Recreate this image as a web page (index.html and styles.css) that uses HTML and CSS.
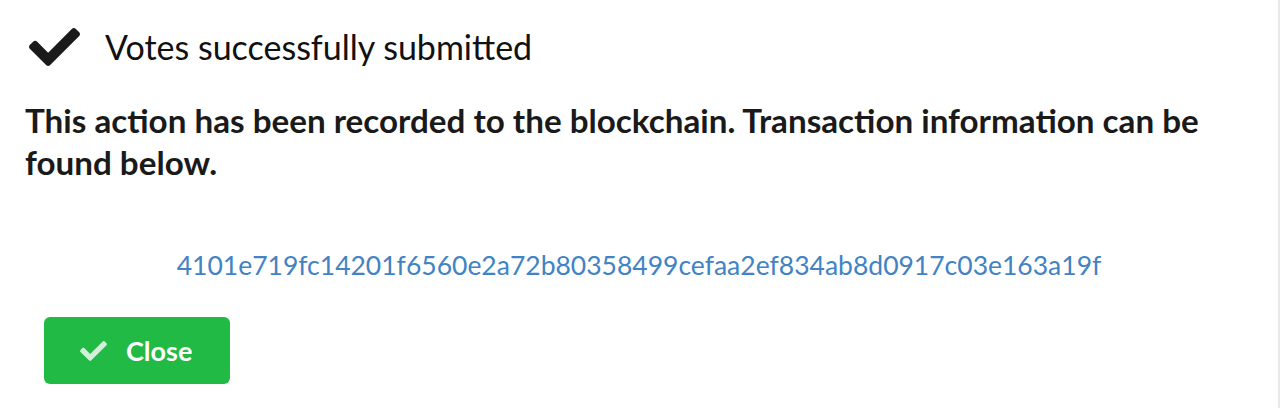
FILE: index.html
```html
<!DOCTYPE html>
<html lang="en">
<head>
<meta charset="utf-8">
<title>Votes submitted</title>
<link rel="stylesheet" href="styles.css">
</head>
<body>
<div class="modal">
  <div class="header">
    <svg class="header-icon" viewBox="0 65 512 382" width="51" height="38" aria-hidden="true">
      <path d="M173.898 439.404l-166.4-166.4c-9.997-9.997-9.997-26.206 0-36.204l36.203-36.204c9.997-9.998 26.207-9.998 36.204 0L192 312.69 432.095 72.596c9.997-9.997 26.207-9.997 36.204 0l36.203 36.204c9.997 9.997 9.997 26.206 0 36.204l-294.4 294.401c-9.998 9.997-26.207 9.997-36.204-.001z"/>
    </svg>
    <span class="header-text">Votes successfully submitted</span>
  </div>
  <div class="content">
    <p class="lead">This action has been recorded to the blockchain. Transaction information can be found below.</p>
    <div class="hash"><a class="hash-link" href="#">4101e719fc14201f6560e2a72b80358499cefaa2ef834ab8d0917c03e163a19f</a></div>
  </div>
  <div class="actions">
    <button class="btn-close" type="button">
      <svg class="btn-icon" viewBox="0 65 512 382" width="27" height="20" aria-hidden="true">
        <path d="M173.898 439.404l-166.4-166.4c-9.997-9.997-9.997-26.206 0-36.204l36.203-36.204c9.997-9.998 26.207-9.998 36.204 0L192 312.69 432.095 72.596c9.997-9.997 26.207-9.997 36.204 0l36.203 36.204c9.997 9.997 9.997 26.206 0 36.204l-294.4 294.401c-9.998 9.997-26.207 9.997-36.204-.001z"/>
      </svg>
      <span>Close</span>
    </button>
  </div>
</div>
</body>
</html>
```

FILE: styles.css
```css
html, body {
  margin: 0;
  padding: 0;
  background: #ffffff;
}

body {
  font-family: Lato, "Open Sans", "Liberation Sans", sans-serif;
  color: #1a1a1a;
}

.modal {
  box-sizing: border-box;
  width: 1280px;
  height: 408px;
  border-right: 2px solid #e9e9e9;
  display: flex;
  flex-direction: column;
}

.header {
  display: flex;
  align-items: center;
  gap: 25px;
  padding: 27px 0 0 29px;
  height: 40px;
}

.header-icon {
  fill: #1a1a1a;
  flex: none;
}

.header-text {
  font-size: 34px;
  font-weight: 400;
  line-height: 40px;
  color: #111111;
}

.content {
  padding: 0 0 0 25px;
}

.lead {
  margin: 32px 0 0 0;
  font-size: 33.2px;
  font-weight: 700;
  line-height: 42px;
  max-width: 1210px;
}

.hash {
  margin: 67px 0 0 -25px;
  text-align: center;
  font-size: 26.5px;
  line-height: 30px;
}

.hash-link {
  color: #4183c4;
  text-decoration: none;
}

.actions {
  padding: 37px 0 0 44px;
}

.btn-close {
  display: flex;
  align-items: center;
  gap: 19px;
  width: 186px;
  height: 67px;
  padding: 0 0 0 36px;
  box-sizing: border-box;
  border: none;
  border-radius: 6px;
  background: #21ba45;
  color: #ffffff;
  font-family: Lato, "Open Sans", "Liberation Sans", sans-serif;
  font-size: 27px;
  font-weight: 700;
  cursor: pointer;
}

.btn-icon {
  fill: rgba(255, 255, 255, 0.8);
  flex: none;
}
```
